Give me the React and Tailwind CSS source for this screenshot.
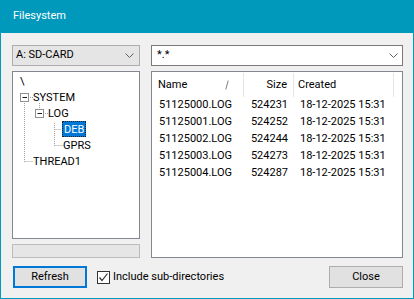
const rows = [
  { name: '51125000.LOG', size: '524231', created: '18-12-2025 15:31' },
  { name: '51125001.LOG', size: '524252', created: '18-12-2025 15:31' },
  { name: '51125002.LOG', size: '524244', created: '18-12-2025 15:31' },
  { name: '51125003.LOG', size: '524273', created: '18-12-2025 15:31' },
  { name: '51125004.LOG', size: '524287', created: '18-12-2025 15:31' },
];

const Chevron = () => (
  <svg width="9" height="6" viewBox="0 0 9 6" className="shrink-0">
    <polyline points="0.5,0.5 4.5,4.5 8.5,0.5" fill="none" stroke="#606060" strokeWidth="1" />
  </svg>
);

const TreeLines = () => (
  <svg width="126" height="100" className="absolute left-0 top-0 pointer-events-none">
    <g stroke="#a0a0a0" strokeWidth="1" strokeDasharray="1 1" fill="none">
      <line x1="11.5" y1="31" x2="11.5" y2="90" />
      <line x1="17" y1="25.5" x2="20" y2="25.5" />
      <line x1="11.5" y1="89.5" x2="20" y2="89.5" />
      <line x1="26.5" y1="31" x2="26.5" y2="38" />
      <line x1="32" y1="41.5" x2="35" y2="41.5" />
      <line x1="41.5" y1="51" x2="41.5" y2="74" />
      <line x1="41.5" y1="57.5" x2="48" y2="57.5" />
      <line x1="41.5" y1="73.5" x2="50" y2="73.5" />
    </g>
    <g>
      <rect x="7.5" y="21.5" width="8" height="8" fill="#fff" stroke="#919191" />
      <line x1="9.5" y1="25.5" x2="14" y2="25.5" stroke="#1a1a1a" />
      <rect x="22.5" y="37.5" width="8" height="8" fill="#fff" stroke="#919191" />
      <line x1="24.5" y1="41.5" x2="29" y2="41.5" stroke="#1a1a1a" />
    </g>
  </svg>
);

export default function App() {
  return (
    <div
      className="w-[414px] h-[299px] flex flex-col bg-[#f0f0f0] border-x border-b border-[#0099bc] text-[11px] text-black"
      style={{ fontFamily: 'Roboto, "Noto Sans", "Liberation Sans", sans-serif' }}
    >
      <div className="h-[33px] shrink-0 bg-[#0099bc] flex items-center pl-[12px] text-white text-[11px]">
        Filesystem
      </div>

      <div className="flex-1 flex flex-col pl-[11px] pr-[10px] pt-[12px] pb-[10px]">
        <div className="flex gap-[11px]">
          {/* left column */}
          <div className="w-[128px] flex flex-col gap-[5px]">
            <div className="h-[21px] bg-[#e5e5e5] border border-[#adadad] flex items-center justify-between pl-[3px] pr-[5px]">
              <span>A: SD-CARD</span>
              <Chevron />
            </div>
            <div className="relative h-[168px] bg-white border border-[#828790] pt-[1px] leading-none">
              <TreeLines />
              <div className="h-[16px] flex items-center pl-[7px]">\</div>
              <div className="h-[16px] flex items-center pl-[20px]">SYSTEM</div>
              <div className="h-[16px] flex items-center pl-[35px]">LOG</div>
              <div className="h-[16px] flex items-center pl-[49px]">
                <span className="h-[16px] px-[1px] flex items-center bg-[#0078d7] text-white border border-dotted border-[#222]">DEB</span>
              </div>
              <div className="h-[16px] flex items-center pl-[50px]">GPRS</div>
              <div className="h-[16px] flex items-center pl-[20px]">THREAD1</div>
            </div>
            <div className="h-[14px] bg-[#e6e6e6] border border-[#bcbcbc]" />
          </div>

          {/* right column */}
          <div className="w-[252px] flex flex-col gap-[5px]">
            <div className="h-[21px] bg-white border border-[#7a7a7a] flex items-center justify-between pl-[5px] pr-[4px]">
              <span>*.*</span>
              <Chevron />
            </div>
            <div className="h-[187px] bg-white border border-[#828790]">
              <div className="h-[25px] pt-[1px] flex">
                <div className="w-[92px] h-[24px] border-r border-[#e5e5e5] flex items-center justify-between pl-[6px] pr-[14px]">
                  <span>Name</span>
                  <svg width="4" height="10" viewBox="0 0 4 10">
                    <line x1="3.2" y1="0.5" x2="0.8" y2="9.5" stroke="#808080" strokeWidth="1" />
                  </svg>
                </div>
                <div className="w-[50px] h-[24px] border-r border-[#e5e5e5] flex items-center justify-end pr-[6px]">
                  Size
                </div>
                <div className="w-[100px] h-[24px] border-r border-[#e5e5e5] flex items-center pl-[4px]">
                  Created
                </div>
              </div>
              {rows.map((r) => (
                <div key={r.name} className="h-[17px] flex items-center">
                  <div className="w-[92px] pl-[7px]">{r.name}</div>
                  <div className="w-[50px] text-right pr-[6px]">{r.size}</div>
                  <div className="w-[100px] pl-[6px]">{r.created}</div>
                </div>
              ))}
            </div>
          </div>
        </div>

        <div className="mt-[8px] flex items-center">
          <button className="ml-[1px] w-[74px] h-[22px] bg-[#e1e1e1] border-2 border-[#0078d7] flex items-center justify-center">
            Refresh
          </button>
          <label className="ml-[10px] flex items-center gap-[3px]">
            <span className="w-[13px] h-[13px] bg-white border border-[#333] flex items-center justify-center">
              <svg width="11" height="11" viewBox="0 0 11 11">
                <polyline points="1.5,5.5 4,8.5 9.5,1.5" fill="none" stroke="#333" strokeWidth="1.2" />
              </svg>
            </span>
            <span>Include sub-directories</span>
          </label>
          <button className="ml-auto w-[74px] h-[22px] bg-[#e1e1e1] border border-[#adadad] flex items-center justify-center">
            Close
          </button>
        </div>
      </div>
    </div>
  );
}
